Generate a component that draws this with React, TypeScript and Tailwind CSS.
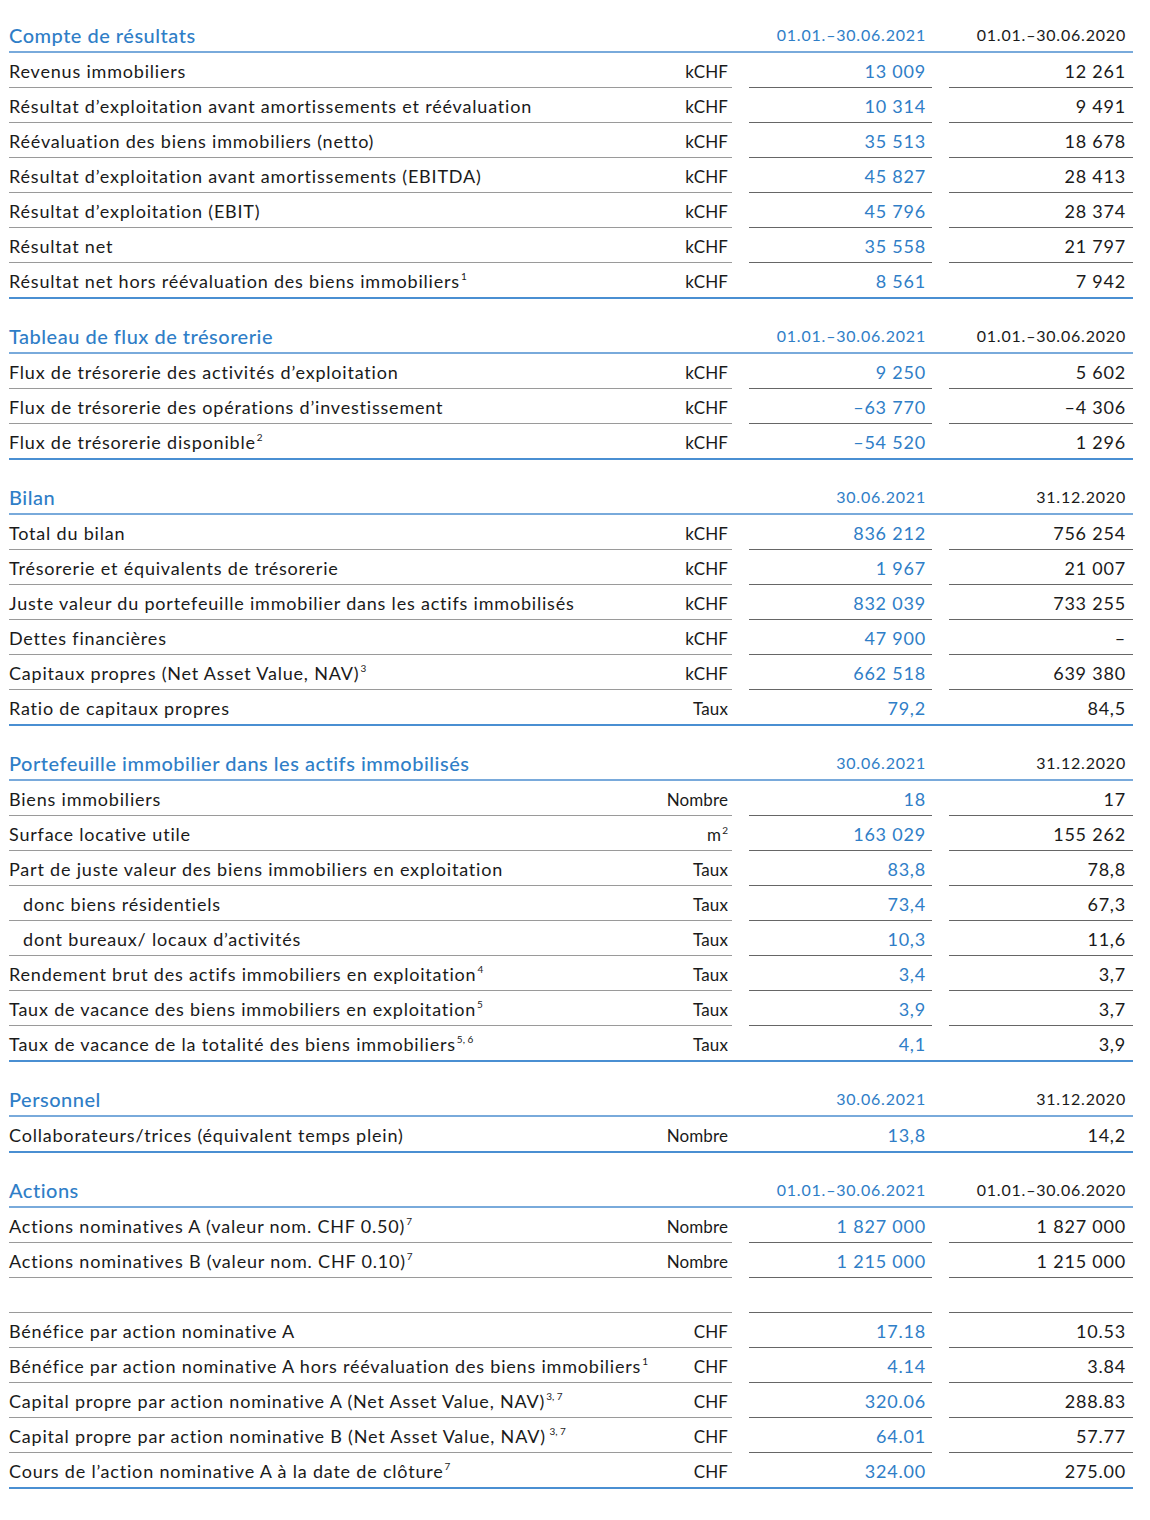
import React from "react";

type Row = { label: string; sup?: string; unit: string; unitSup?: string; a: string; b: string; indent?: boolean; spacer?: boolean };
type Section = { title: string; h1: string; h2: string; rows: Row[] };

const P1 = "01.01.–30.06.2021";
const P0 = "01.01.–30.06.2020";

const sections: Section[] = [
  {
    title: "Compte de résultats", h1: P1, h2: P0,
    rows: [
      { label: "Revenus immobiliers", unit: "kCHF", a: "13 009", b: "12 261" },
      { label: "Résultat d’exploitation avant amortissements et réévaluation", unit: "kCHF", a: "10 314", b: "9 491" },
      { label: "Réévaluation des biens immobiliers (netto)", unit: "kCHF", a: "35 513", b: "18 678" },
      { label: "Résultat d’exploitation avant amortissements (EBITDA)", unit: "kCHF", a: "45 827", b: "28 413" },
      { label: "Résultat d’exploitation (EBIT)", unit: "kCHF", a: "45 796", b: "28 374" },
      { label: "Résultat net", unit: "kCHF", a: "35 558", b: "21 797" },
      { label: "Résultat net hors réévaluation des biens immobiliers", sup: "1", unit: "kCHF", a: "8 561", b: "7 942" },
    ],
  },
  {
    title: "Tableau de flux de trésorerie", h1: P1, h2: P0,
    rows: [
      { label: "Flux de trésorerie des activités d’exploitation", unit: "kCHF", a: "9 250", b: "5 602" },
      { label: "Flux de trésorerie des opérations d’investissement", unit: "kCHF", a: "–63 770", b: "–4 306" },
      { label: "Flux de trésorerie disponible", sup: "2", unit: "kCHF", a: "–54 520", b: "1 296" },
    ],
  },
  {
    title: "Bilan", h1: "30.06.2021", h2: "31.12.2020",
    rows: [
      { label: "Total du bilan", unit: "kCHF", a: "836 212", b: "756 254" },
      { label: "Trésorerie et équivalents de trésorerie", unit: "kCHF", a: "1 967", b: "21 007" },
      { label: "Juste valeur du portefeuille immobilier dans les actifs immobilisés", unit: "kCHF", a: "832 039", b: "733 255" },
      { label: "Dettes financières", unit: "kCHF", a: "47 900", b: "–" },
      { label: "Capitaux propres (Net Asset Value, NAV)", sup: "3", unit: "kCHF", a: "662 518", b: "639 380" },
      { label: "Ratio de capitaux propres", unit: "Taux", a: "79,2", b: "84,5" },
    ],
  },
  {
    title: "Portefeuille immobilier dans les actifs immobilisés", h1: "30.06.2021", h2: "31.12.2020",
    rows: [
      { label: "Biens immobiliers", unit: "Nombre", a: "18", b: "17" },
      { label: "Surface locative utile", unit: "m", unitSup: "2", a: "163 029", b: "155 262" },
      { label: "Part de juste valeur des biens immobiliers en exploitation", unit: "Taux", a: "83,8", b: "78,8" },
      { label: "donc biens résidentiels", unit: "Taux", a: "73,4", b: "67,3", indent: true },
      { label: "dont bureaux/ locaux d’activités", unit: "Taux", a: "10,3", b: "11,6", indent: true },
      { label: "Rendement brut des actifs immobiliers en exploitation", sup: "4", unit: "Taux", a: "3,4", b: "3,7" },
      { label: "Taux de vacance des biens immobiliers en exploitation", sup: "5", unit: "Taux", a: "3,9", b: "3,7" },
      { label: "Taux de vacance de la totalité des biens immobiliers", sup: "5, 6", unit: "Taux", a: "4,1", b: "3,9" },
    ],
  },
  {
    title: "Personnel", h1: "30.06.2021", h2: "31.12.2020",
    rows: [
      { label: "Collaborateurs/trices (équivalent temps plein)", unit: "Nombre", a: "13,8", b: "14,2" },
    ],
  },
  {
    title: "Actions", h1: P1, h2: P0,
    rows: [
      { label: "Actions nominatives A (valeur nom. CHF 0.50)", sup: "7", unit: "Nombre", a: "1 827 000", b: "1 827 000" },
      { label: "Actions nominatives B (valeur nom. CHF 0.10)", sup: "7", unit: "Nombre", a: "1 215 000", b: "1 215 000" },
      { label: "", unit: "", a: "", b: "", spacer: true },
      { label: "Bénéfice par action nominative A", unit: "CHF", a: "17.18", b: "10.53" },
      { label: "Bénéfice par action nominative A hors réévaluation des biens immobiliers", sup: "1", unit: "CHF", a: "4.14", b: "3.84" },
      { label: "Capital propre par action nominative A (Net Asset Value, NAV)", sup: "3, 7", unit: "CHF", a: "320.06", b: "288.83" },
      { label: "Capital propre par action nominative B (Net Asset Value, NAV)", sup: " 3, 7", unit: "CHF", a: "64.01", b: "57.77" },
      { label: "Cours de l’action nominative A à la date de clôture", sup: "7", unit: "CHF", a: "324.00", b: "275.00" },
    ],
  },
];

function Sup({ children }: { children: React.ReactNode }) {
  return <span className="inline-block align-top text-[10px] leading-none mt-[3px] ml-[1px] tracking-normal whitespace-pre">{children}</span>;
}

function DataRow({ r, last }: { r: Row; last: boolean }) {
  const lb = last ? "" : "border-b border-[#9a9a9a]";
  const vb = last ? "" : "border-b border-[#666666]";
  return (
    <div className={`flex ${last ? "h-[36px] border-b-2 border-[#4a8fd2]" : "h-[35px]"}`}>
      <div className={`w-[723px] flex items-center justify-between pt-[3px] pr-[4px] ${lb}`}>
        <span className={`whitespace-nowrap ${r.indent ? "pl-[14px]" : ""}`}>
          {r.label}
          {r.sup ? <Sup>{r.sup}</Sup> : null}
        </span>
        <span className="whitespace-nowrap text-[17px] tracking-[0.1px]">
          {r.unit}
          {r.unitSup ? <Sup>{r.unitSup}</Sup> : null}
        </span>
      </div>
      <div className="w-[17px]" />
      <div className={`w-[183px] flex items-center justify-end pt-[3px] pr-[6px] text-[#2f7ec7] ${vb}`}>{r.a}</div>
      <div className="w-[17px]" />
      <div className={`w-[184px] flex items-center justify-end pt-[3px] pr-[7px] ${vb}`}>{r.b}</div>
    </div>
  );
}

export default function App() {
  return (
    <div className="w-[1150px] min-h-[1520px] bg-white pt-[18px] pl-[9px] text-[#1a1a1a]" style={{ fontFamily: "Lato, 'Noto Sans', sans-serif" }}>
      <div className="w-[1124px] flex flex-col">
        {sections.map((s, si) => (
          <div key={si} className={si > 0 ? "mt-[20px]" : ""}>
            <div className="flex h-[35px] items-center border-b-2 border-[#79aadb]">
              <div className="w-[723px] pt-[1px] text-[20px] font-medium text-[#2f7ec7] tracking-[0.5px]">{s.title}</div>
              <div className="w-[17px]" />
              <div className="w-[183px] text-right pr-[6px] text-[16px] tracking-[0.8px] text-[#2f7ec7]">{s.h1}</div>
              <div className="w-[17px]" />
              <div className="w-[184px] text-right pr-[7px] text-[16px] tracking-[0.8px]">{s.h2}</div>
            </div>
            <div className="text-[18px] tracking-[0.8px]">
              {s.rows.map((r, ri) => (
                <DataRow key={ri} r={r} last={ri === s.rows.length - 1} />
              ))}
            </div>
          </div>
        ))}
      </div>
    </div>
  );
}
